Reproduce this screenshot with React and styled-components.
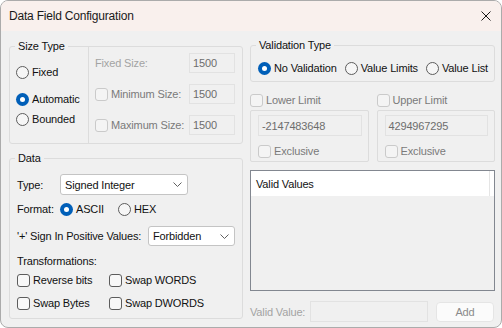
import React from "react";
import styled, { createGlobalStyle } from "styled-components";

const GlobalStyle = createGlobalStyle`
  html, body {
    margin: 0;
    padding: 0;
    background: #fff;
  }
  body {
    font-family: "Liberation Sans", Arial, sans-serif;
    font-size: 11px;
    letter-spacing: -0.15px;
    color: #111;
  }
`;

const Window = styled.div`
  width: 502px;
  height: 328px;
  box-sizing: border-box;
  border: 1px solid #ababab;
  border-radius: 8px;
  overflow: hidden;
  background: #f0f0f0;
  display: flex;
  flex-direction: column;
`;

const TitleBar = styled.div`
  height: 30px;
  flex: none;
  background: #f9f0ed;
  display: flex;
  align-items: center;
  justify-content: space-between;
  padding: 0 10px 0 8px;
`;

const Title = styled.span`
  font-size: 12px;
  letter-spacing: -0.2px;
  color: #1a1a1a;
`;

const Body = styled.div`
  flex: 1;
  display: flex;
  gap: 7px;
  padding: 14px 6px 0 8px;
`;

const Column = styled.div`
  width: ${(p) => p.$w}px;
  display: flex;
  flex-direction: column;
  padding-top: ${(p) => p.$pt || 0}px;
`;

const Group = styled.div`
  position: relative;
  box-sizing: border-box;
  border: 1px solid #dcdcdc;
  border-radius: 3px;
  height: ${(p) => p.$h}px;
  margin-top: ${(p) => p.$mt || 0}px;
`;

const Caption = styled.span`
  position: absolute;
  top: -8px;
  left: 5px;
  padding: 0 3px;
  line-height: 14px;
  background: #f0f0f0;
`;

const SizeGrid = styled.div`
  display: grid;
  grid-template-columns: 78px 1fr;
  height: 100%;
`;

const RadioCol = styled.div`
  display: flex;
  flex-direction: column;
  padding: 17px 0 0 6px;
`;

const SizePanel = styled.div`
  border-left: 1px solid #dcdcdc;
  display: flex;
  flex-direction: column;
  gap: 11px;
  padding: 6px 7px 0 6px;
`;

const SizeRow = styled.div`
  display: flex;
  align-items: center;
  justify-content: space-between;
  height: 20px;
`;

const DataBody = styled.div`
  padding: 15px 0 0 7px;
`;

const Row = styled.div`
  display: flex;
  align-items: center;
  height: ${(p) => p.$h || 16}px;
  margin-top: ${(p) => p.$mt || 0}px;
  gap: ${(p) => p.$gap || 0}px;
  padding: ${(p) => p.$pad || 0};
`;

const Label = styled.span`
  width: ${(p) => (p.$w ? `${p.$w}px` : "auto")};
  flex: none;
  color: ${(p) => (p.$disabled ? "#a3a3a3" : "inherit")};
  white-space: nowrap;
`;

const Choice = styled.label`
  display: flex;
  align-items: center;
  gap: 3px;
  height: 16px;
  width: ${(p) => (p.$w ? `${p.$w}px` : "auto")};
  margin-top: ${(p) => p.$mt || 0}px;
  flex: none;
  white-space: nowrap;
  color: ${(p) => (p.$disabled ? "#7a7a7a" : "inherit")};
`;

const RadioDot = styled.span`
  width: 13px;
  height: 13px;
  box-sizing: border-box;
  border-radius: 50%;
  flex: none;
  position: relative;
  border: ${(p) => (p.$on ? "none" : "1px solid #5c5c5c")};
  background: ${(p) => (p.$on ? "#005fb8" : "#f6f6f6")};

  &::after {
    content: "";
    display: ${(p) => (p.$on ? "block" : "none")};
    position: absolute;
    left: 4px;
    top: 4px;
    width: 5px;
    height: 5px;
    border-radius: 50%;
    background: #fff;
  }
`;

const CheckBox = styled.span`
  width: 13px;
  height: 13px;
  box-sizing: border-box;
  border-radius: 3px;
  flex: none;
  border: 1px solid ${(p) => (p.$disabled ? "#cacaca" : "#5c5c5c")};
  background: ${(p) => (p.$disabled ? "#f4f4f4" : "#f8f8f8")};
`;

const TextBox = styled.div`
  box-sizing: border-box;
  width: ${(p) => (p.$w ? `${p.$w}px` : "100%")};
  height: ${(p) => p.$h || 21}px;
  border: 1px solid #e2e2e2;
  background: #f0f0f0;
  color: #6d6d6d;
  display: flex;
  align-items: center;
  padding-left: 3px;
  flex: none;
`;

const Combo = styled.div`
  box-sizing: border-box;
  width: ${(p) => p.$w}px;
  height: ${(p) => p.$h || 21}px;
  border: 1px solid #c4c4c4;
  border-radius: 3px;
  background: #fff;
  display: flex;
  align-items: center;
  justify-content: space-between;
  padding: 0 5px 0 4px;
  flex: none;
`;

const Text = styled.div`
  line-height: 14px;
  margin-top: ${(p) => p.$mt || 0}px;
`;

const LimitGrid = styled.div`
  display: grid;
  grid-template-columns: 1fr 1fr;
  column-gap: 8px;
  margin-top: ${(p) => p.$mt || 0}px;
`;

const LimitPanel = styled.div`
  box-sizing: border-box;
  height: 52px;
  border: 1px solid #dcdcdc;
  border-radius: 2px;
  padding: 4px 6px 0 7px;
  display: flex;
  flex-direction: column;
  gap: 7px;
`;

const ListBox = styled.div`
  box-sizing: border-box;
  height: 121px;
  margin-top: 8px;
  border: 1px solid #828790;
  background: #f0f0f0;
`;

const ListHeader = styled.div`
  height: 25px;
  background: #fff;
  display: flex;
`;

const HeaderCell = styled.div`
  width: 239px;
  border-right: 1px solid #e5e5e5;
  display: flex;
  align-items: center;
  padding-left: 5px;
  box-sizing: border-box;
`;

const BottomRow = styled.div`
  display: flex;
  align-items: center;
  margin-top: 10px;
  height: 21px;
`;

const Button = styled.div`
  box-sizing: border-box;
  width: 58px;
  height: 20px;
  margin-left: auto;
  margin-right: 1px;
  border: 1px solid #e5e5e5;
  border-radius: 4px;
  background: #fbfbfb;
  color: #8a8a8a;
  display: flex;
  align-items: center;
  justify-content: center;
`;

const Chevron = () => (
  <svg width="9" height="5" viewBox="0 0 9 5">
    <path d="M0.5 0.5 L4.5 4.5 L8.5 0.5" fill="none" stroke="#606060" strokeWidth="1" />
  </svg>
);

const CloseIcon = () => (
  <svg width="10" height="10" viewBox="0 0 10 10">
    <path d="M0.5 0.5 L9.5 9.5 M9.5 0.5 L0.5 9.5" stroke="#1a1a1a" strokeWidth="1" />
  </svg>
);

const Radio = ({ on, children, mt }) => (
  <Choice $mt={mt}>
    <RadioDot $on={on} />
    {children}
  </Choice>
);

const Check = ({ disabled, children, w }) => (
  <Choice $disabled={disabled} $w={w}>
    <CheckBox $disabled={disabled} />
    {children}
  </Choice>
);

export default function App() {
  return (
    <>
      <GlobalStyle />
      <Window>
        <TitleBar>
          <Title>Data Field Configuration</Title>
          <CloseIcon />
        </TitleBar>
        <Body>
          <Column $w={234} $pt={1}>
            <Group $h={98}>
              <Caption>Size Type</Caption>
              <SizeGrid>
                <RadioCol>
                  <Radio>Fixed</Radio>
                  <Radio on mt={11}>Automatic</Radio>
                  <Radio mt={4}>Bounded</Radio>
                </RadioCol>
                <SizePanel>
                  <SizeRow>
                    <Label $disabled>Fixed Size:</Label>
                    <TextBox $w={46} $h={20}>1500</TextBox>
                  </SizeRow>
                  <SizeRow>
                    <Check disabled>Minimum Size:</Check>
                    <TextBox $w={46} $h={20}>1500</TextBox>
                  </SizeRow>
                  <SizeRow>
                    <Check disabled>Maximum Size:</Check>
                    <TextBox $w={46} $h={20}>1500</TextBox>
                  </SizeRow>
                </SizePanel>
              </SizeGrid>
            </Group>

            <Group $h={161} $mt={14}>
              <Caption>Data</Caption>
              <DataBody>
                <Row $h={21}>
                  <Label $w={43}>Type:</Label>
                  <Combo $w={128}>
                    Signed Integer
                    <Chevron />
                  </Combo>
                </Row>
                <Row $mt={6}>
                  <Label $w={43}>Format:</Label>
                  <Row $gap={14}>
                    <Radio on>ASCII</Radio>
                    <Radio>HEX</Radio>
                  </Row>
                </Row>
                <Row $h={20} $mt={9}>
                  <Label $w={131}>'+' Sign In Positive Values:</Label>
                  <Combo $w={87} $h={20}>
                    Forbidden
                    <Chevron />
                  </Combo>
                </Row>
                <Text $mt={8}>Transformations:</Text>
                <Row $mt={4}>
                  <Check w={92}>Reverse bits</Check>
                  <Check>Swap WORDS</Check>
                </Row>
                <Row $mt={7}>
                  <Check w={92}>Swap Bytes</Check>
                  <Check>Swap DWORDS</Check>
                </Row>
              </DataBody>
            </Group>
          </Column>

          <Column $w={245}>
            <Group $h={37}>
              <Caption>Validation Type</Caption>
              <Row $gap={8} $pad="14px 0 0 7px">
                <Radio on>No Validation</Radio>
                <Radio>Value Limits</Radio>
                <Radio>Value List</Radio>
              </Row>
            </Group>

            <LimitGrid $mt={10}>
              <Row>
                <Check disabled>Lower Limit</Check>
              </Row>
              <Row>
                <Check disabled>Upper Limit</Check>
              </Row>
            </LimitGrid>
            <LimitGrid $mt={2}>
              <LimitPanel>
                <TextBox>-2147483648</TextBox>
                <Check disabled>Exclusive</Check>
              </LimitPanel>
              <LimitPanel>
                <TextBox>4294967295</TextBox>
                <Check disabled>Exclusive</Check>
              </LimitPanel>
            </LimitGrid>

            <ListBox>
              <ListHeader>
                <HeaderCell>Valid Values</HeaderCell>
              </ListHeader>
            </ListBox>

            <BottomRow>
              <Label $w={60} $disabled>Valid Value:</Label>
              <TextBox $w={118} />
              <Button>Add</Button>
            </BottomRow>
          </Column>
        </Body>
      </Window>
    </>
  );
}
